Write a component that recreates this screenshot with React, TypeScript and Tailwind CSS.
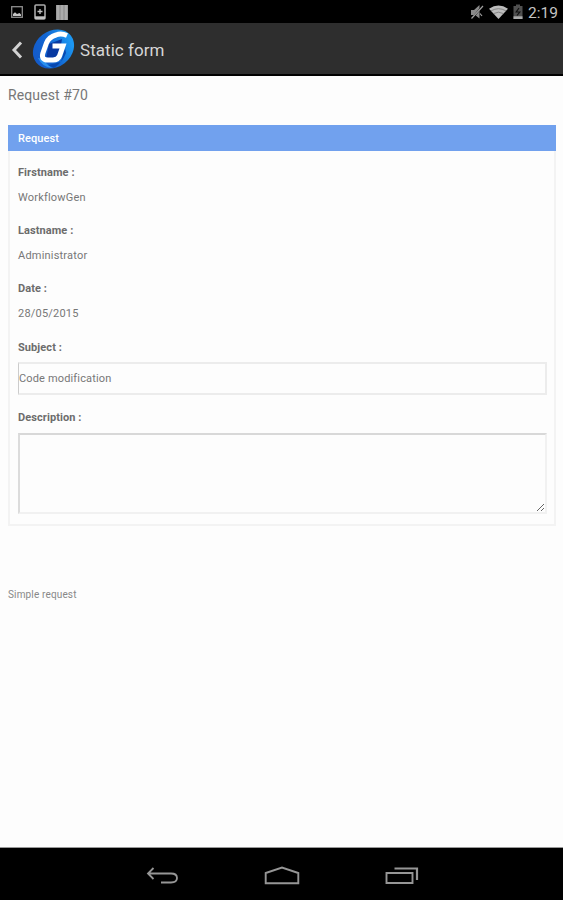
import { useState } from 'react';

interface Field {
  label: string;
  value: string;
}

const fields: Field[] = [
  { label: 'Firstname :', value: 'WorkflowGen' },
  { label: 'Lastname :', value: 'Administrator' },
  { label: 'Date :', value: '28/05/2015' },
];

function StatusBar() {
  return (
    <div className="flex h-[23px] shrink-0 items-center justify-between bg-black pl-[11px] pr-[5px]">
      <div className="flex items-center pt-px">
        {/* picture */}
        <svg width="12" height="12" viewBox="0 0 12 12">
          <rect x="0.7" y="0.7" width="10.6" height="10.6" fill="none" stroke="#8e8e8e" strokeWidth="1.3" />
          <path d="M2 10V8L4 6.3L6 8L8.5 7L10 8.5V10Z" fill="#c4c4c4" />
        </svg>
        {/* device */}
        <svg className="ml-[11px]" width="12" height="16" viewBox="0 0 12 16">
          <rect x="1" y="1" width="10" height="14" rx="1" fill="none" stroke="#a9a9a9" strokeWidth="1.6" />
          <path d="M1 12.3H11V15H1Z" fill="#c4c4c4" />
          <path d="M6 5V10M3.5 7.5H8.5" stroke="#c4c4c4" strokeWidth="1.3" />
        </svg>
        {/* bars */}
        <svg className="ml-[10px]" width="12" height="15" viewBox="0 0 12 15">
          <rect width="12" height="15" fill="#999" />
          <path d="M2 0V15M6 0V15M10 0V15" stroke="#ababab" strokeWidth="2" />
        </svg>
      </div>
      <div className="flex items-center">
        {/* muted */}
        <svg width="14" height="16" viewBox="0 0 14 16">
          <path d="M1 6H4L9.5 1V14.5L5 11H1Z" fill="#8a8a8a" />
          <path d="M13 1.5L2 14.5" stroke="#000" strokeWidth="1.8" />
          <path d="M13 2L1.5 14.5M10 9.5L12 12" stroke="#a0a0a0" strokeWidth="1.2" />
        </svg>
        {/* wifi */}
        <svg className="ml-[5px]" width="19" height="14" viewBox="0 0 19 14">
          <path d="M0 3.8Q9.5 -2.8 19 3.8L9.5 14Z" fill="#bdbdbd" />
          <path d="M2 5.9Q9.5 1.5 17 5.9M4.5 8.6Q9.5 5.7 14.5 8.6" fill="none" stroke="#777" strokeWidth="0.8" />
        </svg>
        {/* battery */}
        <svg className="ml-[5px]" width="10" height="16" viewBox="0 0 10 16">
          <path d="M3 0.5H7V2H9.5V15H0.5V2H3Z" fill="#505050" />
          <path d="M6 4L3.2 8H6.8L4 11.5" fill="none" stroke="#111" strokeWidth="1.2" />
          <path d="M0.5 12.3H9.5V15H0.5Z" fill="#aaa" />
        </svg>
        <span className="ml-[5px] mt-[3px] text-[15.5px] leading-5 text-[#c4c4c4]">2:19</span>
      </div>
    </div>
  );
}

function Logo() {
  return (
    <svg className="ml-[9px]" width="43" height="41" viewBox="0 0 43 41">
      <defs>
        <linearGradient id="logo-blue" x1="0" y1="0" x2="1" y2="0.2">
          <stop offset="0" stopColor="#1458c8" />
          <stop offset="0.55" stopColor="#1266d2" />
          <stop offset="1" stopColor="#1c97f2" />
        </linearGradient>
      </defs>
      <ellipse cx="21.5" cy="20" rx="22" ry="18" transform="rotate(-38 21.5 20)" fill="url(#logo-blue)" />
      <path d="M6 29Q10 38 20 39Q14 35 11 30Z" fill="#2990ee" />
      <path d="M17 15L30 10L27 28L14 30Z" fill="#0839a1" />
      <path d="M16 36L29 33L33 19L34 24Q30 34 22 39Z" fill="#0848b0" />
      <path
        d="M35 6.5Q29 4 24 6Q17 8 14.5 14L10.8 24.5Q9 31 16 31H21Q26 31 27.5 27L31 17H20.5"
        fill="none"
        stroke="#fff"
        strokeWidth="5"
      />
    </svg>
  );
}

function ActionBar() {
  return (
    <div className="flex h-[53px] shrink-0 items-center border-b-2 border-black bg-[#2e2e2e] pl-[11px] pt-px">
      <svg className="mt-px" width="12" height="18" viewBox="0 0 12 18">
        <path d="M10 1.5L3 9L10 16.5" fill="none" stroke="#d2d2d2" strokeWidth="3" />
      </svg>
      <Logo />
      <h1 className="ml-[5px] mt-[2px] text-[17px] leading-6 tracking-[0.05px] text-[#d6d6d6]">Static form</h1>
    </div>
  );
}

function NavBar() {
  return (
    <div className="flex h-[52px] shrink-0 items-center justify-center gap-[85px] bg-black pt-1">
      <svg width="34" height="20" viewBox="0 0 34 20" fill="none" stroke="#969696" strokeWidth="1.8">
        <path d="M8.5 2L3 7.5L8.5 13M3 7.5H26Q32 7.5 32 12Q32 16.5 26 16.5H16" />
      </svg>
      <svg width="36" height="20" viewBox="0 0 36 20" fill="none" stroke="#969696" strokeWidth="1.9">
        <path d="M1.7 17.2V7L18 1.5L34.3 7V17.2Z" />
      </svg>
      <svg width="34" height="20" viewBox="0 0 34 20" fill="none" stroke="#969696" strokeWidth="1.9">
        <path d="M1.5 7H27.5V17H1.5Z" />
        <path d="M9.5 2.5H32V14" strokeWidth="2.2" />
      </svg>
    </div>
  );
}

export default function App() {
  const [subject, setSubject] = useState('Code modification');
  const [description, setDescription] = useState('');

  return (
    <div className="flex h-[900px] w-[563px] flex-col overflow-hidden bg-[#fdfdfd] font-['Roboto',sans-serif]">
      <StatusBar />
      <ActionBar />

      <main className="flex-1 border-b border-[#999] pl-2 pr-[7px] pt-[9px] text-[11px] tracking-[0.08px] text-[#777]">
        <h2 className="text-[14px] leading-5 tracking-[0.1px]">Request #70</h2>

        <section className="mt-5 h-[401px] border-2 border-t-0 border-[#f3f3f3]">
          <div className="-mx-[2px] h-[26px] bg-[#71a1ee] pl-[10px] pt-px leading-[26px] font-medium text-white">Request</div>

          <div className="pl-2 pr-[7px] pt-[14px]">
            {fields.map((field) => (
              <div key={field.label} className="mb-[10.2px]">
                <div className="leading-4 font-bold text-[#6c6c6c]">{field.label}</div>
                <div className="mt-[5px] pb-[3px] leading-6 tracking-[0.2px]">{field.value}</div>
              </div>
            ))}

            <label className="block leading-4 font-bold text-[#6c6c6c]" htmlFor="subject">Subject :</label>
            <input
              id="subject"
              value={subject}
              onChange={(e) => setSubject(e.target.value)}
              className="mt-[6px] block h-[33px] w-full border-2 border-l border-[#ececec] border-l-[#ccc] bg-transparent tracking-[0.15px] outline-none"
            />

            <label className="mt-[15px] block leading-4 font-bold text-[#6c6c6c]" htmlFor="description">Description :</label>
            <textarea
              id="description"
              value={description}
              onChange={(e) => setDescription(e.target.value)}
              className="mt-[7px] block h-[81px] w-full resize border-2 border-[#f1f1f1] border-t-[#d8d8d8] border-l-[#dcdcdc] bg-transparent outline-none"
            />
          </div>
        </section>

        <p className="mt-[60px] pt-px text-[10px] leading-4 tracking-[0.15px] text-[#888]">Simple request</p>
      </main>

      <NavBar />
    </div>
  );
}
